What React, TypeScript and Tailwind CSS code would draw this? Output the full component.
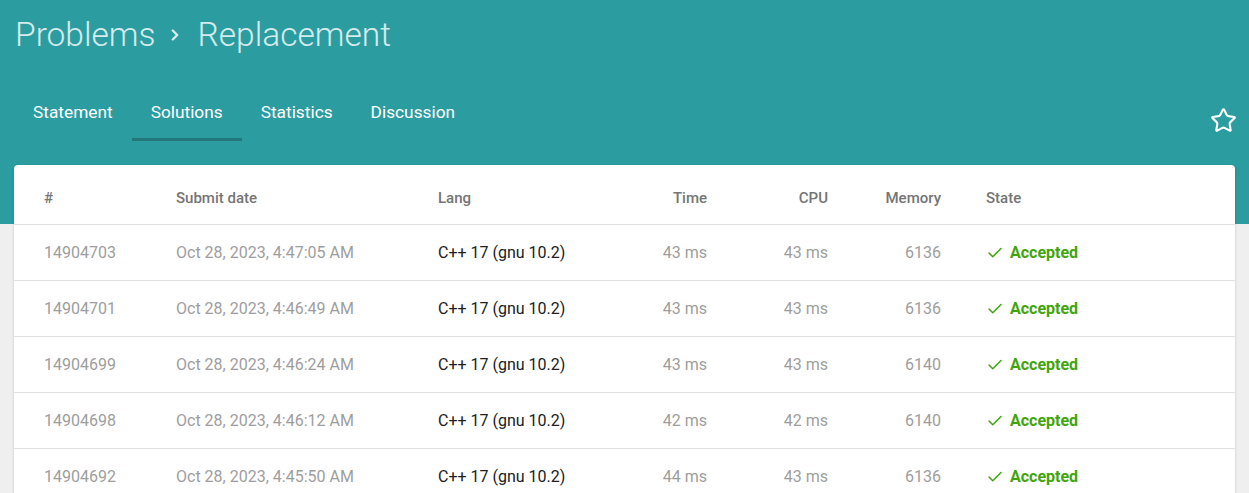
import { Check, ChevronRight, Star } from "lucide-react";

const rows = [
  { id: "14904703", date: "Oct 28, 2023, 4:47:05 AM", time: "43 ms", cpu: "43 ms", mem: "6136" },
  { id: "14904701", date: "Oct 28, 2023, 4:46:49 AM", time: "43 ms", cpu: "43 ms", mem: "6136" },
  { id: "14904699", date: "Oct 28, 2023, 4:46:24 AM", time: "43 ms", cpu: "43 ms", mem: "6140" },
  { id: "14904698", date: "Oct 28, 2023, 4:46:12 AM", time: "42 ms", cpu: "42 ms", mem: "6140" },
  { id: "14904692", date: "Oct 28, 2023, 4:45:50 AM", time: "44 ms", cpu: "43 ms", mem: "6136" },
];

const tabs = ["Statement", "Solutions", "Statistics", "Discussion"];

const cols = "grid grid-cols-[30px_132px_262px_149px_120px_121px_113px_45px_1fr] items-center";

export default function App() {
  return (
    <div className="min-h-screen bg-[#efefef] font-['Roboto',sans-serif]">
      <header className="h-[224px] bg-[#2b9ca0]">
        <div className="flex h-[86px] items-start px-[15px] pt-[14px]">
          <h1 className="flex items-center text-[33.5px] font-light leading-[42px] text-white/80">
            <span>Problems</span>
            <ChevronRight className="ml-[11px] mr-[13px] h-[18px] w-[18px]" strokeWidth={3.2} />
            <span>Replacement</span>
          </h1>
        </div>
        <div className="flex items-center justify-between pl-[14px] pr-[12px]">
          <nav className="flex">
            {tabs.map((t) => (
              <div
                key={t}
                className={
                  "flex h-[55px] items-center border-b-[3px] px-[19px] pt-[2px] text-[17.3px] font-normal text-white " +
                  (t === "Solutions" ? "border-[#23777a]" : "border-transparent")
                }
              >
                {t}
              </div>
            ))}
          </nav>
          <Star className="mt-[14px] h-[27px] w-[27px] text-white" strokeWidth={1.9} />
        </div>
      </header>

      <div className="mx-[14px] -mt-[59px] rounded-t-[4px] bg-white shadow-[0_1px_3px_rgba(0,0,0,0.18)]">
        <div className={cols + " h-[60px] border-b border-[#e0e0e0] pt-[8px] text-[15px] font-medium text-[#757575]"}>
          <div />
          <div>#</div>
          <div>Submit date</div>
          <div>Lang</div>
          <div className="text-right">Time</div>
          <div className="text-right">CPU</div>
          <div className="text-right">Memory</div>
          <div />
          <div>State</div>
        </div>
        {rows.map((r) => (
          <div key={r.id} className={cols + " h-[56px] border-b border-[#e0e0e0] text-[16px] text-[#9e9e9e]"}>
            <div />
            <div>{r.id}</div>
            <div>{r.date}</div>
            <div className="text-[#212121]">C++ 17 (gnu 10.2)</div>
            <div className="text-right">{r.time}</div>
            <div className="text-right">{r.cpu}</div>
            <div className="text-right">{r.mem}</div>
            <div />
            <div className="flex items-center gap-[6px] font-bold text-[#3fa60a]">
              <Check className="h-[18px] w-[18px]" strokeWidth={2} />
              Accepted
            </div>
          </div>
        ))}
      </div>
    </div>
  );
}
